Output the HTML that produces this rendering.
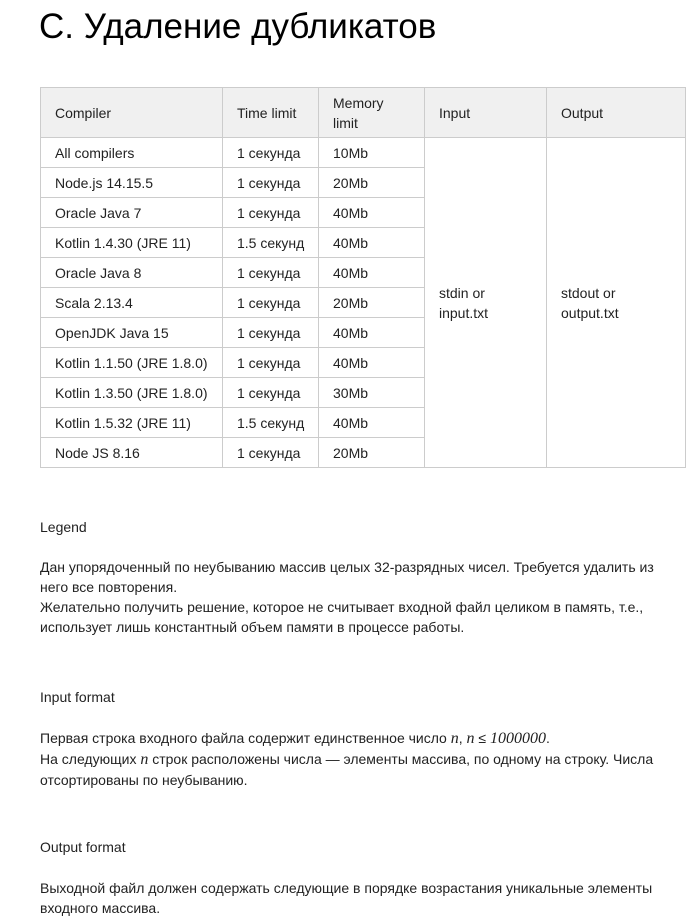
<!DOCTYPE html>
<html><head><meta charset="utf-8"><style>
body{margin:0;background:#fff;font-family:"Liberation Sans",Arial,sans-serif;color:#222;font-size:14px;}
h1{position:absolute;left:39px;top:5px;margin:0;font-weight:normal;font-size:35px;color:#000;line-height:44px;}
table{position:absolute;left:40px;top:87px;border-collapse:collapse;}
td,th{border:1px solid #ccc;padding:0 0 0 14px;font-weight:normal;text-align:left;height:29px;line-height:20px;vertical-align:middle;}
th{background:#f0f0f0;height:49px;}
.t{position:absolute;left:40px;line-height:20px;margin:0;width:630px;}
i{font-family:"Liberation Serif",serif;font-size:16px;}
</style></head><body>
<h1>C. Удаление дубликатов</h1>
<table>
<tr><th style="width:167px">Compiler</th><th style="width:81px">Time limit</th><th style="width:91px">Memory<br>limit</th><th style="width:107px">Input</th><th style="width:124px">Output</th></tr>
<tr><td>All compilers</td><td>1 секунда</td><td>10Mb</td><td rowspan="11">stdin or<br>input.txt</td><td rowspan="11">stdout or<br>output.txt</td></tr>
<tr><td>Node.js 14.15.5</td><td>1 секунда</td><td>20Mb</td></tr>
<tr><td>Oracle Java 7</td><td>1 секунда</td><td>40Mb</td></tr>
<tr><td>Kotlin 1.4.30 (JRE 11)</td><td>1.5 секунд</td><td>40Mb</td></tr>
<tr><td>Oracle Java 8</td><td>1 секунда</td><td>40Mb</td></tr>
<tr><td>Scala 2.13.4</td><td>1 секунда</td><td>20Mb</td></tr>
<tr><td>OpenJDK Java 15</td><td>1 секунда</td><td>40Mb</td></tr>
<tr><td>Kotlin 1.1.50 (JRE 1.8.0)</td><td>1 секунда</td><td>40Mb</td></tr>
<tr><td>Kotlin 1.3.50 (JRE 1.8.0)</td><td>1 секунда</td><td>30Mb</td></tr>
<tr><td>Kotlin 1.5.32 (JRE 11)</td><td>1.5 секунд</td><td>40Mb</td></tr>
<tr><td>Node JS 8.16</td><td>1 секунда</td><td>20Mb</td></tr>
</table>
<p class="t" style="top:517px">Legend</p>
<p class="t" style="top:557px">Дан упорядоченный по неубыванию массив целых 32-разрядных чисел. Требуется удалить из него все повторения.<br>Желательно получить решение, которое не считывает входной файл целиком в память, т.е., использует лишь константный объем памяти в процессе работы.</p>
<p class="t" style="top:687px">Input format</p>
<p class="t" style="top:728px">Первая строка входного файла содержит единственное число <i>n</i>, <i>n</i> ≤ <i>1000000</i>.<br>На следующих <i>n</i> строк расположены числа — элементы массива, по одному на строку. Числа отсортированы по неубыванию.</p>
<p class="t" style="top:837px">Output format</p>
<p class="t" style="top:878px">Выходной файл должен содержать следующие в порядке возрастания уникальные элементы входного массива.</p>
</body></html>
